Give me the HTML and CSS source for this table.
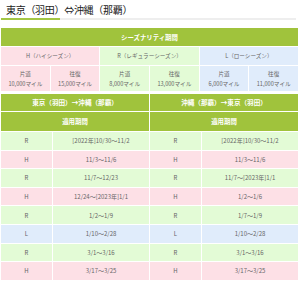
FILE: index.html
```html
<!DOCTYPE html>
<html lang="ja">
<head>
<meta charset="utf-8">
<link rel="stylesheet" href="styles.css">
</head>
<body>
<div class="title">東京（羽田）⇔沖縄（那覇）</div>
<div class="rule"><span class="rule-accent"></span></div>

<div class="season-grid">
  <div class="cell head span6">シーズナリティ期間</div>
  <div class="cell pink span2">H（ハイシーズン）</div>
  <div class="cell green span2">R（レギュラーシーズン）</div>
  <div class="cell blue span2">L（ローシーズン）</div>
  <div class="cell pink sub">片道<br>10,000マイル</div>
  <div class="cell pink sub">往復<br>15,000マイル</div>
  <div class="cell green sub">片道<br>8,000マイル</div>
  <div class="cell green sub">往復<br>13,000マイル</div>
  <div class="cell blue sub">片道<br>6,000マイル</div>
  <div class="cell blue sub">往復<br>11,000マイル</div>
</div>

<div class="routes">
  <div class="route">
    <div class="cell head span2 route-head">東京（羽田）→沖縄（那覇）</div>
    <div class="cell head span2 period-head">適用期間</div>
    <div class="cell green row">R</div><div class="cell green row">[2022年]10/30～11/2</div>
    <div class="cell pink row">H</div><div class="cell pink row">11/3～11/6</div>
    <div class="cell green row">R</div><div class="cell green row">11/7～12/23</div>
    <div class="cell pink row">H</div><div class="cell pink row">12/24～[2023年]1/1</div>
    <div class="cell green row">R</div><div class="cell green row">1/2～1/9</div>
    <div class="cell blue row">L</div><div class="cell blue row">1/10～2/28</div>
    <div class="cell green row">R</div><div class="cell green row">3/1～3/16</div>
    <div class="cell pink row">H</div><div class="cell pink row">3/17～3/25</div>
  </div>
  <div class="route">
    <div class="cell head span2 route-head">沖縄（那覇）→東京（羽田）</div>
    <div class="cell head span2 period-head">適用期間</div>
    <div class="cell green row">R</div><div class="cell green row">[2022年]10/30～11/2</div>
    <div class="cell pink row">H</div><div class="cell pink row">11/3～11/6</div>
    <div class="cell green row">R</div><div class="cell green row">11/7～[2023年]1/1</div>
    <div class="cell pink row">H</div><div class="cell pink row">1/2～1/6</div>
    <div class="cell green row">R</div><div class="cell green row">1/7～1/9</div>
    <div class="cell blue row">L</div><div class="cell blue row">1/10～2/28</div>
    <div class="cell green row">R</div><div class="cell green row">3/1～3/16</div>
    <div class="cell pink row">H</div><div class="cell pink row">3/17～3/25</div>
  </div>
</div>
</body>
</html>
```
FILE: styles.css
```css
html, body {
  margin: 0;
  padding: 0;
  background: #ffffff;
}
body {
  width: 300px;
  font-family: "Noto Sans CJK JP", "Noto Sans", sans-serif;
  color: #666666;
}
.title {
  height: 18px;
  padding-left: 6px;
  font-size: 10px;
  line-height: 19px;
  font-weight: 400;
  color: #222222;
  letter-spacing: -0.3px;
}
.rule {
  margin-left: 1px;
  width: 295px;
  height: 2px;
  background: #eeeeee;
  display: flex;
}
.rule-accent {
  width: 59px;
  height: 2px;
  background: #a3c644;
}
.season-grid {
  margin-top: 8px;
  margin-left: 1px;
  width: 297px;
  display: grid;
  grid-template-columns: repeat(6, 1fr);
  grid-template-rows: 18px 18px 25px;
  gap: 1px;
}
.cell {
  display: flex;
  align-items: center;
  justify-content: center;
  text-align: center;
  font-size: 5.6px;
  line-height: 9px;
}
.span6 { grid-column: span 6; }
.span2 { grid-column: span 2; }
.head {
  background: #a0c33c;
  color: #ffffff;
  font-weight: 700;
  font-size: 6.4px;
}
.pink { background: #fde0e6; }
.green { background: #e3fbd6; }
.blue { background: #e0ecfb; }
.sub { line-height: 10px; }
.routes {
  margin-top: 3px;
  margin-left: 1px;
  width: 297px;
  display: grid;
  grid-template-columns: 1fr 1fr;
  gap: 1px;
}
.route {
  display: grid;
  grid-template-columns: 51px 1fr;
  grid-template-rows: 17px 19px repeat(8, 17.6px);
  gap: 1px;
}
.route-head { font-size: 6.6px; }
.period-head { font-size: 6.4px; }
.route > .cell.row { font-size: 6px; }
```
